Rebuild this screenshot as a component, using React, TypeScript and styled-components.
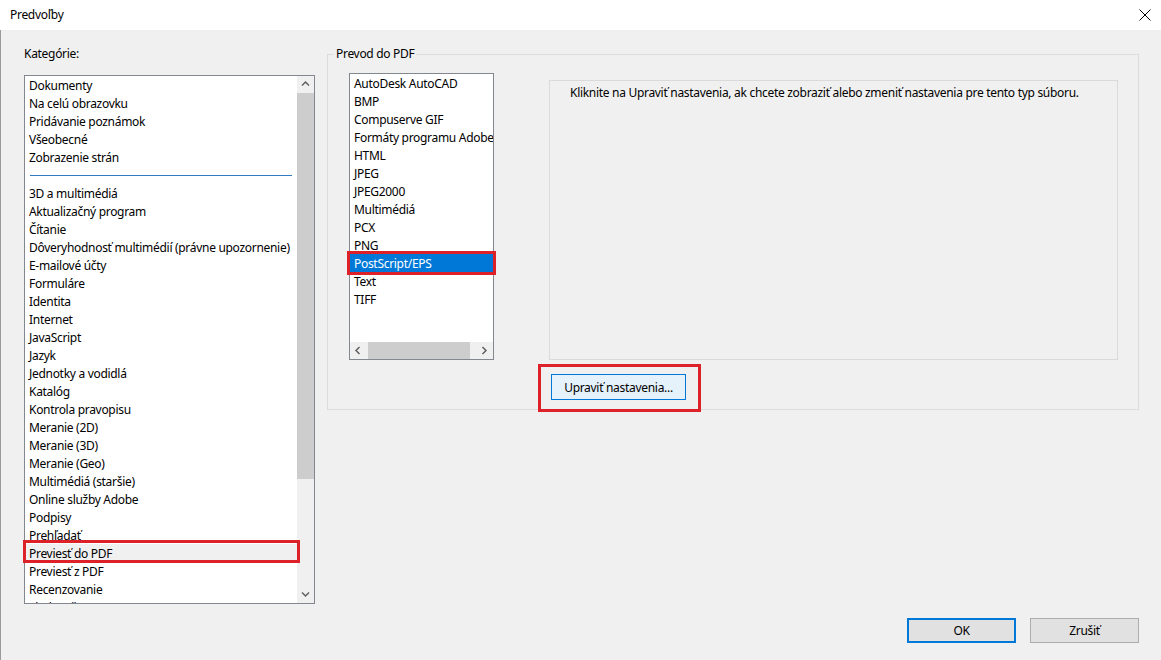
import React from 'react'
import styled, { createGlobalStyle } from 'styled-components'

const GlobalStyle = createGlobalStyle`
  html, body {
    margin: 0;
    padding: 0;
  }

  body {
    background: #f0f0f0;
    color: #000;
    font-family: 'Segoe UI', 'Noto Sans', sans-serif;
    font-size: 12px;
    letter-spacing: -0.3px;
  }
`

const Window = styled.div`
  display: flex;
  flex-direction: column;
  height: 660px;
  overflow: hidden;
  width: 1161px;
`

const TitleBar = styled.div`
  align-items: center;
  background: #fff;
  display: flex;
  flex-shrink: 0;
  height: 30px;
  justify-content: space-between;
  padding: 0 9px 0 10px;
`

const Title = styled.span`
  line-height: 16px;
`

const CloseButton = styled.div`
  align-items: center;
  display: flex;
  height: 14px;
  justify-content: center;
  width: 14px;
`

const Body = styled.div`
  background: #f0f0f0;
  border-left: 1px solid #9a9a9a;
  display: flex;
  flex: 1;
  flex-direction: column;
  padding: 16px 22px 17px 23px;
`

const Main = styled.div`
  display: flex;
  gap: 12px;
`

const LeftColumn = styled.div`
  display: flex;
  flex-direction: column;
  width: 291px;
`

const Label = styled.div`
  height: 16px;
  line-height: 16px;
  margin-bottom: 13px;
`

const ListBox = styled.div<{ $width?: number; $height: number; $column?: boolean }>`
  background: #fff;
  border: 1px solid #828790;
  box-sizing: border-box;
  display: flex;
  flex-direction: ${props => (props.$column ? 'column' : 'row')};
  flex-shrink: 0;
  height: ${props => props.$height}px;
  width: ${props => (props.$width ? `${props.$width}px` : 'auto')};
`

const Items = styled.div`
  clip-path: inset(0 -6px 0 -6px);
  display: flex;
  flex: 1;
  flex-direction: column;
  min-width: 0;
`

const ListItem = styled.div<{ $selected?: 'active' | 'inactive' }>`
  background: ${props =>
    props.$selected === 'active' ? '#0078d7' : props.$selected === 'inactive' ? '#f0f0f0' : 'transparent'};
  box-sizing: border-box;
  color: ${props => (props.$selected === 'active' ? '#fff' : '#000')};
  flex-shrink: 0;
  height: 18px;
  line-height: 18px;
  overflow: hidden;
  padding: 1px 0 0 4px;
  white-space: nowrap;
`

const Separator = styled.div`
  align-items: center;
  display: flex;
  flex-shrink: 0;
  height: 18px;
  padding: 0 5px;

  &::before {
    background: #2f7cc0;
    content: '';
    flex: 1;
    height: 1px;
  }
`

/* red annotation frame drawn over an element */
const Marked = styled.div<{ $t: number; $r: number; $b: number; $l: number }>`
  flex-shrink: 0;
  position: relative;

  &::after {
    border: 3px solid #dc2129;
    bottom: ${props => -props.$b}px;
    content: '';
    left: ${props => -props.$l}px;
    pointer-events: none;
    position: absolute;
    right: ${props => -props.$r}px;
    top: ${props => -props.$t}px;
  }
`

const VScroll = styled.div`
  background: #f0f0f0;
  display: flex;
  flex-direction: column;
  flex-shrink: 0;
  width: 17px;
`

const HScroll = styled.div`
  background: #f0f0f0;
  display: flex;
  flex-shrink: 0;
  height: 17px;
`

const ArrowBox = styled.div`
  align-items: center;
  display: flex;
  flex-shrink: 0;
  height: 17px;
  justify-content: center;
  width: 17px;
`

const Track = styled.div<{ $horizontal?: boolean }>`
  display: flex;
  flex: 1;
  flex-direction: ${props => (props.$horizontal ? 'row' : 'column')};
`

const Thumb = styled.div<{ $size: number; $horizontal?: boolean }>`
  background: #cdcdcd;
  flex-shrink: 0;
  ${props => (props.$horizontal ? `width: ${props.$size}px; margin: 0 0 0 1px;` : `height: ${props.$size}px;`)}
`

const GroupBox = styled.fieldset`
  border: 1px solid #dcdcdc;
  box-sizing: border-box;
  flex: 1;
  height: 364px;
  margin: 0;
  min-width: 0;
  padding: 11px 0 0 0;
`

const Legend = styled.legend`
  line-height: 16px;
  margin-left: 6px;
  padding: 0 2px;
`

const GroupContent = styled.div`
  display: flex;
  gap: 55px;
  padding-left: 21px;
`

const DetailColumn = styled.div`
  display: flex;
  flex-direction: column;
  padding-top: 7px;
`

const InfoBox = styled.div`
  border: 1px solid #dadada;
  box-sizing: border-box;
  height: 280px;
  line-height: 16px;
  padding: 4px 20px;
  white-space: nowrap;
  width: 569px;
`

const ButtonRow = styled.div`
  display: flex;
  margin-top: 14px;
  padding-left: 2px;
`

const Button = styled.button<{ $variant?: 'default' | 'hover' | 'plain' }>`
  background: ${props => (props.$variant === 'hover' ? '#e5f1fb' : '#e1e1e1')};
  border: ${props =>
    props.$variant === 'default'
      ? '2px solid #0078d7'
      : props.$variant === 'hover'
      ? '1px solid #0078d7'
      : '1px solid #adadad'};
  box-sizing: border-box;
  color: #000;
  font-family: inherit;
  font-size: 12px;
  height: ${props => (props.$variant === 'hover' ? 26 : 25)}px;
  letter-spacing: inherit;
  padding: 0;
  width: ${props => (props.$variant === 'hover' ? 135 : 109)}px;
`

const Footer = styled.div`
  display: flex;
  gap: 14px;
  justify-content: flex-end;
  margin-top: auto;
`

const Chevron = ({ dir }: { dir: 'up' | 'down' | 'left' | 'right' }) => {
  const points = {
    up: '1,5.5 4.5,2 8,5.5',
    down: '1,2.5 4.5,6 8,2.5',
    left: '5.5,1 2,4.5 5.5,8',
    right: '2.5,1 6,4.5 2.5,8',
  }[dir]
  return (
    <svg width="9" height="9" viewBox="0 0 9 9">
      <polyline points={points} fill="none" stroke="#606060" strokeWidth="1.5" />
    </svg>
  )
}

const categoriesTop = ['Dokumenty', 'Na celú obrazovku', 'Pridávanie poznámok', 'Všeobecné', 'Zobrazenie strán']

const categories = [
  '3D a multimédiá',
  'Aktualizačný program',
  'Čítanie',
  'Dôveryhodnosť multimédií (právne upozornenie)',
  'E-mailové účty',
  'Formuláre',
  'Identita',
  'Internet',
  'JavaScript',
  'Jazyk',
  'Jednotky a vodidlá',
  'Katalóg',
  'Kontrola pravopisu',
  'Meranie (2D)',
  'Meranie (3D)',
  'Meranie (Geo)',
  'Multimédiá (staršie)',
  'Online služby Adobe',
  'Podpisy',
  'Prehľadať',
  'Previesť do PDF',
  'Previesť z PDF',
  'Recenzovanie',
  'Sledovač',
  'Správca dôvery',
]

const fileTypes = [
  'AutoDesk AutoCAD',
  'BMP',
  'Compuserve GIF',
  'Formáty programu Adobe PDF',
  'HTML',
  'JPEG',
  'JPEG2000',
  'Multimédiá',
  'PCX',
  'PNG',
  'PostScript/EPS',
  'Text',
  'TIFF',
]

const App: React.FC = () => {
  return (
    <Window>
      <GlobalStyle />
      <TitleBar>
        <Title>Predvoľby</Title>
        <CloseButton>
          <svg width="12" height="12" viewBox="0 0 12 12">
            <path d="M0.5 0.5 L11.5 11.5 M11.5 0.5 L0.5 11.5" stroke="#000" strokeWidth="1" />
          </svg>
        </CloseButton>
      </TitleBar>
      <Body>
        <Main>
          <LeftColumn>
            <Label>Kategórie:</Label>
            <ListBox $height={529}>
              <Items>
                {categoriesTop.map(name => (
                  <ListItem key={name}>{name}</ListItem>
                ))}
                <Separator />
                {categories.map(name =>
                  name === 'Previesť do PDF' ? (
                    <Marked key={name} $t={4} $r={3} $b={1} $l={2}>
                      <ListItem $selected="inactive">{name}</ListItem>
                    </Marked>
                  ) : (
                    <ListItem key={name}>{name}</ListItem>
                  )
                )}
              </Items>
              <VScroll>
                <ArrowBox>
                  <Chevron dir="up" />
                </ArrowBox>
                <Track>
                  <Thumb $size={386} />
                </Track>
                <ArrowBox>
                  <Chevron dir="down" />
                </ArrowBox>
              </VScroll>
            </ListBox>
          </LeftColumn>
          <GroupBox>
            <Legend>Prevod do PDF</Legend>
            <GroupContent>
              <ListBox $width={145} $height={287} $column>
                <Items>
                  {fileTypes.map(name =>
                    name === 'PostScript/EPS' ? (
                      <Marked key={name} $t={3} $r={3} $b={3} $l={3}>
                        <ListItem $selected="active">{name}</ListItem>
                      </Marked>
                    ) : (
                      <ListItem key={name}>{name}</ListItem>
                    )
                  )}
                </Items>
                <HScroll>
                  <ArrowBox>
                    <Chevron dir="left" />
                  </ArrowBox>
                  <Track $horizontal>
                    <Thumb $size={102} $horizontal />
                  </Track>
                  <ArrowBox>
                    <Chevron dir="right" />
                  </ArrowBox>
                </HScroll>
              </ListBox>
              <DetailColumn>
                <InfoBox>
                  Kliknite na Upraviť nastavenia, ak chcete zobraziť alebo zmeniť nastavenia pre tento typ súboru.
                </InfoBox>
                <ButtonRow>
                  <Marked $t={10} $r={15} $b={12} $l={13}>
                    <Button $variant="hover">Upraviť nastavenia...</Button>
                  </Marked>
                </ButtonRow>
              </DetailColumn>
            </GroupContent>
          </GroupBox>
        </Main>
        <Footer>
          <Button $variant="default">OK</Button>
          <Button $variant="plain">Zrušiť</Button>
        </Footer>
      </Body>
    </Window>
  )
}

export default App
